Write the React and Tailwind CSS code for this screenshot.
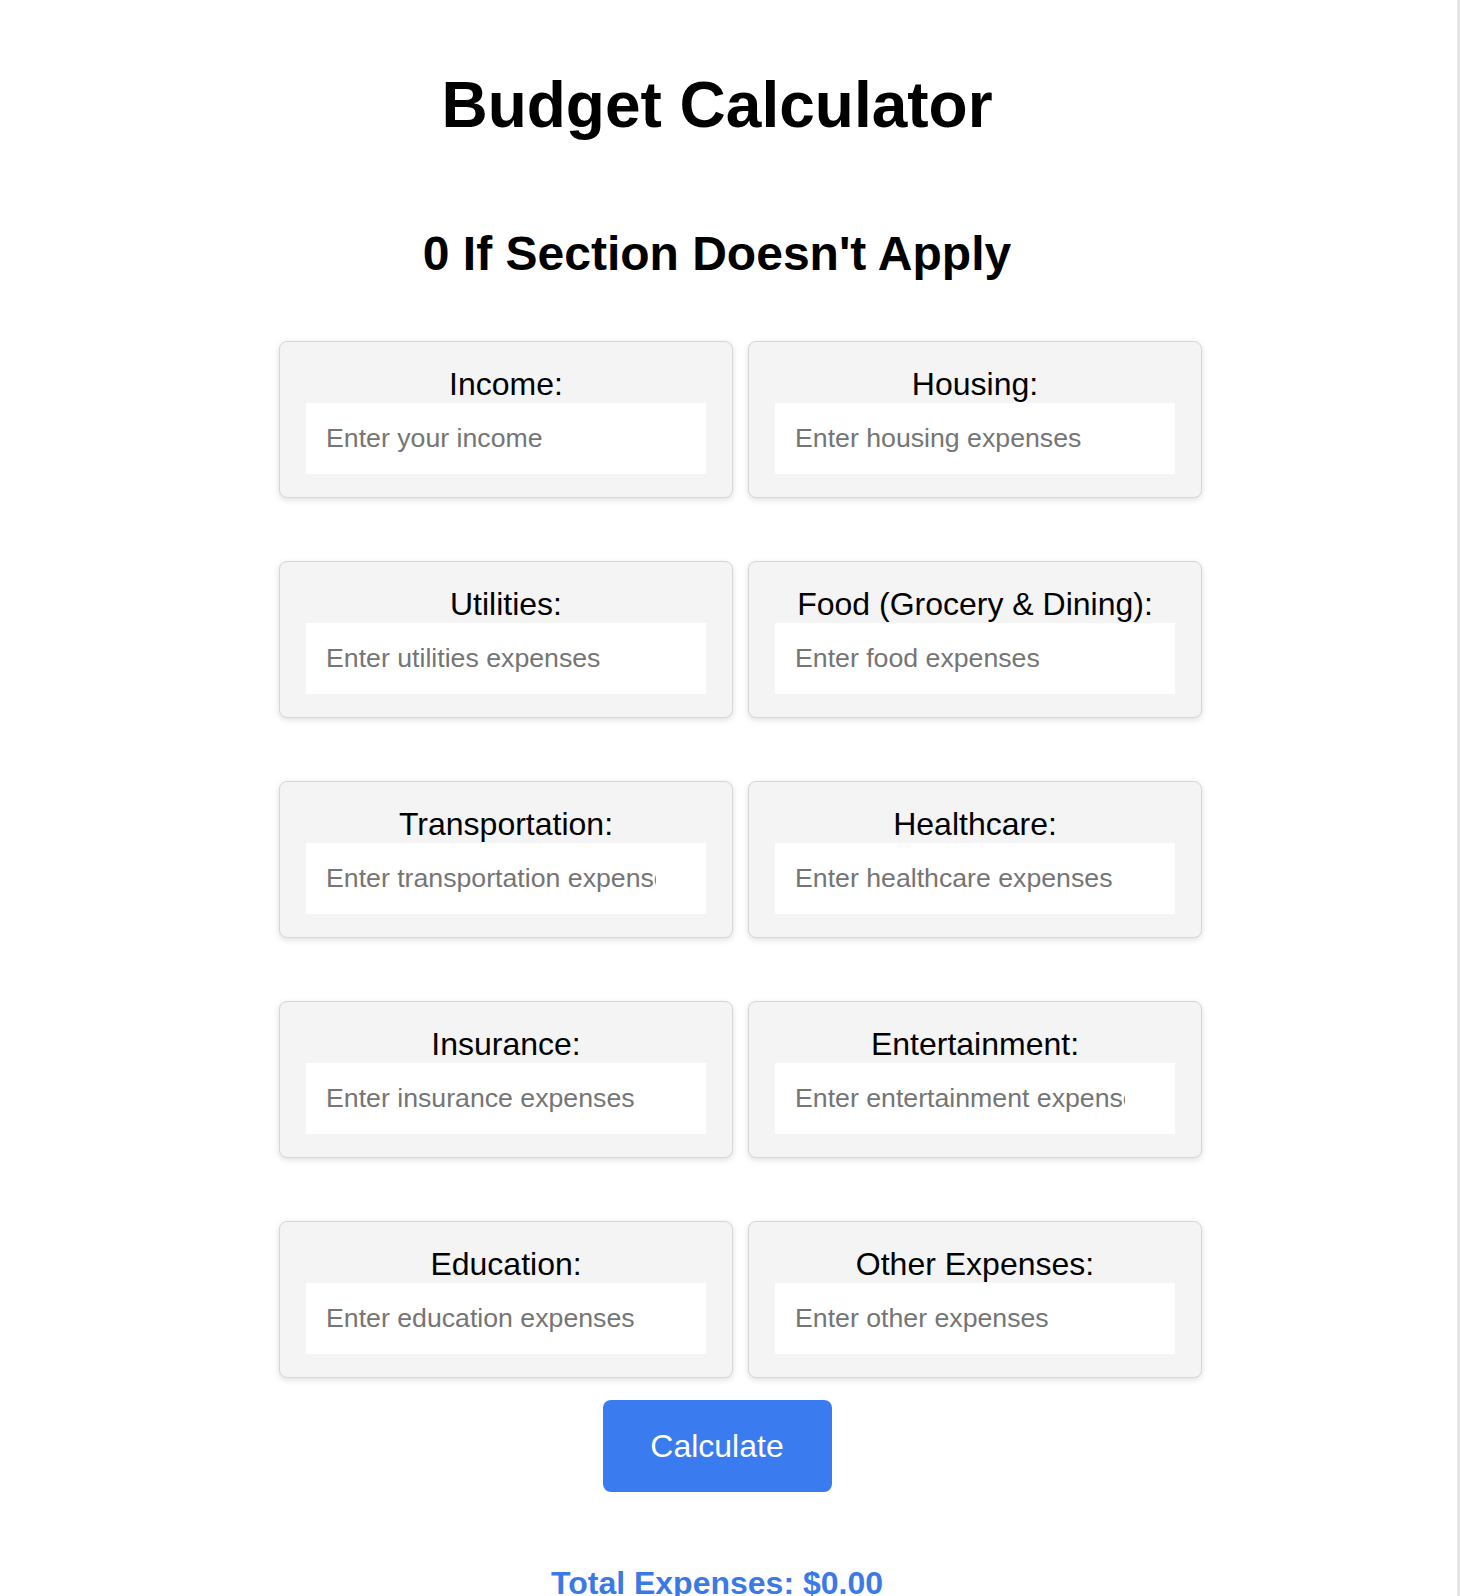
import React from "react";

const fields = [
  ["Income:", "Enter your income"],
  ["Housing:", "Enter housing expenses"],
  ["Utilities:", "Enter utilities expenses"],
  ["Food (Grocery & Dining):", "Enter food expenses"],
  ["Transportation:", "Enter transportation expenses"],
  ["Healthcare:", "Enter healthcare expenses"],
  ["Insurance:", "Enter insurance expenses"],
  ["Entertainment:", "Enter entertainment expenses"],
  ["Education:", "Enter education expenses"],
  ["Other Expenses:", "Enter other expenses"],
];

export default function App() {
  return (
    <div className="flex w-[1460px] min-h-[1596px] bg-white font-['Liberation_Sans',Arial,sans-serif] text-black overflow-hidden">
      <div className="w-[1434px] flex flex-col items-center">
        <h1 className="mt-[68px] text-[64px] leading-[74px] font-bold">Budget Calculator</h1>
        <h2 className="mt-[84px] text-[48px] leading-[55px] font-bold">0 If Section Doesn't Apply</h2>
        <div className="mt-[60px] self-start ml-[279px] w-[923px] grid grid-cols-2 gap-x-[15px] gap-y-[63px]">
          {fields.map(([label, ph]) => (
            <div
              key={label}
              className="h-[157px] bg-[#f4f4f4] border border-[#d6d6d6] rounded-[8px] shadow-[0_2px_6px_rgba(0,0,0,0.13)] flex flex-col items-center pt-[24px]"
            >
              <label className="text-[32px] leading-[37px] text-black">{label}</label>
              <input
                type="text"
                placeholder={ph}
                className="w-[400px] h-[71px] bg-white pl-[20px] pr-[50px] text-[26.7px] text-black placeholder:text-[#757575] outline-none border-0"
              />
            </div>
          ))}
        </div>
        <button className="mt-[22px] w-[229px] h-[92px] bg-[#3b7bf0] rounded-[8px] text-white text-[32px] leading-[37px]">
          Calculate
        </button>
        <div className="mt-[73px] text-[32px] leading-[37px] font-bold text-[#3b7ae6]">Total Expenses: $0.00</div>
      </div>
      <div className="flex-1" />
      <div className="w-[3px] bg-[#e2e2e2] border-l border-[#ececec]" />
    </div>
  );
}
